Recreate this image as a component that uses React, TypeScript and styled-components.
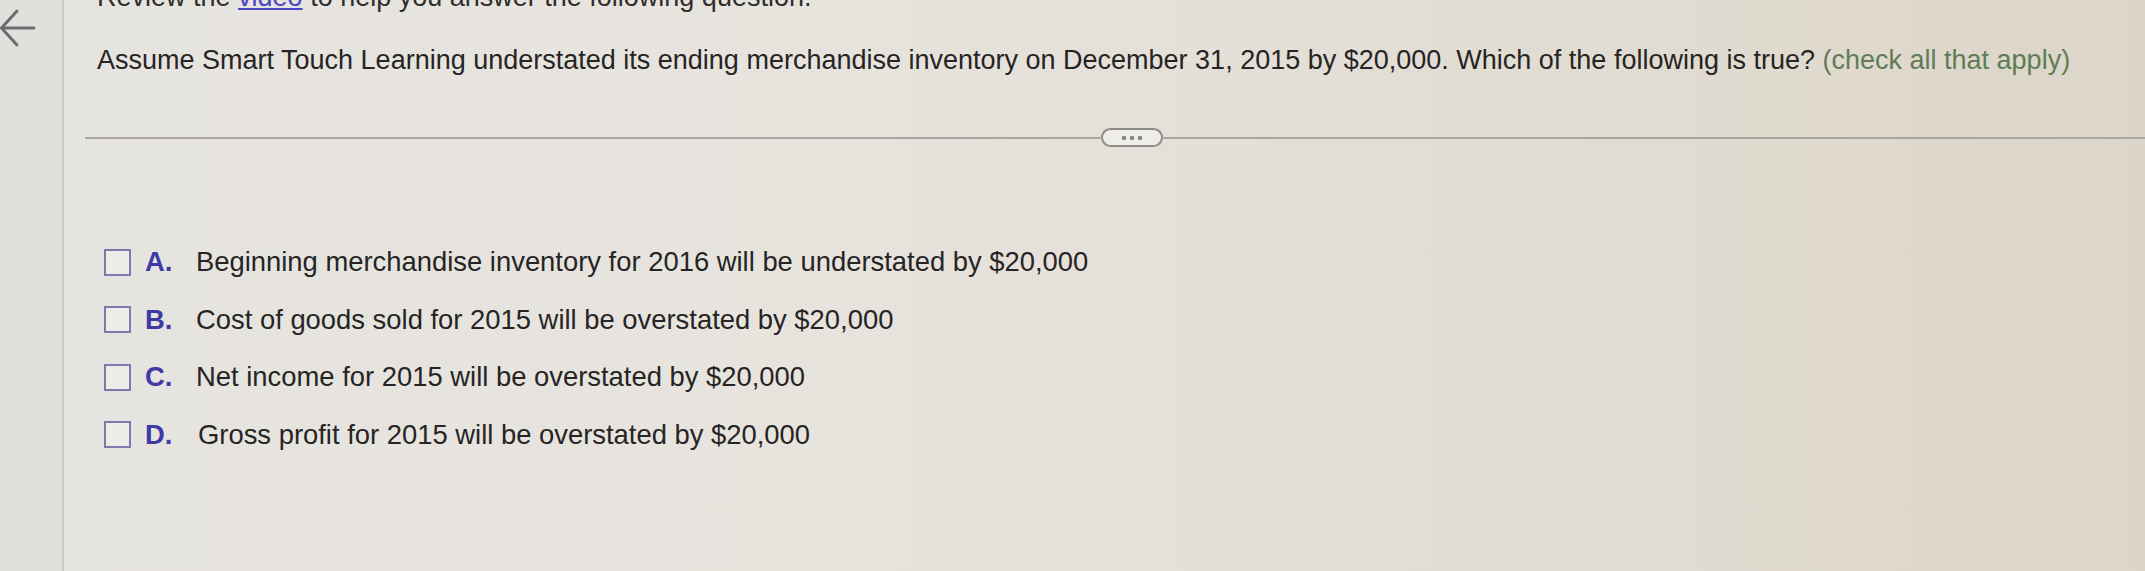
import React from "react";
import styled, { createGlobalStyle } from "styled-components";

const GlobalStyle = createGlobalStyle`
  html, body {
    margin: 0;
    padding: 0;
  }
  body {
    width: 2145px;
    height: 571px;
    overflow: hidden;
    font-family: "Liberation Sans", Arial, sans-serif;
    color: #262424;
    background: linear-gradient(90deg, #e6e4e0 0%, #e7e4de 35%, #e2ddd3 70%, #dcd5c9 100%);
  }
`;

const Page = styled.div`
  display: flex;
  height: 571px;
  overflow: hidden;
`;

const Sidebar = styled.aside`
  width: 64px;
  flex-shrink: 0;
  border-right: 2px solid #cdcbc7;
  background: #e1e0dd;
  padding-top: 8px;
  box-sizing: border-box;
`;

const BackButton = styled.button`
  display: block;
  border: none;
  background: none;
  padding: 0;
  margin: 0;
  cursor: pointer;
`;

const Main = styled.main`
  flex: 1;
  display: flex;
  flex-direction: column;
  min-width: 0;
`;

const Content = styled.div`
  padding-left: 33px;
`;

const Intro = styled.p`
  margin: -18px 0 0;
  font-size: 27px;
  line-height: 30px;
  color: #2f2d2d;
  white-space: nowrap;
`;

const VideoLink = styled.a`
  color: #4a46c8;
  text-decoration: underline;
`;

const Question = styled.p`
  margin: 33px 0 0;
  font-size: 27px;
  line-height: 30px;
  color: #262424;
  white-space: nowrap;
`;

const Hint = styled.span`
  color: #5f7c55;
`;

const DividerRow = styled.div`
  display: flex;
  align-items: center;
  margin: 53px 0 0 21px;
`;

const Rule = styled.div<{ $grow: number }>`
  flex: ${(p) => p.$grow};
  height: 2px;
  background: #a9a6a2;
`;

const MoreButton = styled.button`
  width: 62px;
  height: 19px;
  border: 2px solid #8e8b88;
  border-radius: 10px;
  background: #efede9;
  display: flex;
  align-items: center;
  justify-content: center;
  gap: 4px;
  padding: 0;
  flex-shrink: 0;
`;

const Dot = styled.span`
  width: 4px;
  height: 4px;
  background: #8a8785;
  border-radius: 1px;
`;

const Options = styled.ul`
  list-style: none;
  margin: 100px 0 0;
  padding: 0 0 0 40px;
  display: flex;
  flex-direction: column;
  gap: 27.5px;
`;

const Option = styled.li`
  display: flex;
  align-items: center;
  height: 30px;
  font-size: 27.4px;
  color: #262424;
`;

const Box = styled.span`
  width: 27px;
  height: 27px;
  border: 2.5px solid #7d7ab0;
  background: #eeece9;
  box-sizing: border-box;
  flex-shrink: 0;
`;

const Letter = styled.span<{ $wide?: boolean }>`
  font-weight: bold;
  color: #3d3aa6;
  margin-left: 14px;
  width: ${(p) => (p.$wide ? "53px" : "51px")};
  flex-shrink: 0;
`;

const options = [
  { letter: "A.", text: "Beginning merchandise inventory for 2016 will be understated by $20,000" },
  { letter: "B.", text: "Cost of goods sold for 2015 will be overstated by $20,000" },
  { letter: "C.", text: "Net income for 2015 will be overstated by $20,000" },
  { letter: "D.", text: "Gross profit for 2015 will be overstated by $20,000", wide: true },
];

export default function App() {
  return (
    <>
      <GlobalStyle />
      <Page>
        <Sidebar>
          <BackButton aria-label="Back">
            <svg width="36" height="44" viewBox="0 0 36 44" fill="none">
              <path
                d="M34 20H2M17 3L1.5 20L17 37"
                stroke="#6d6a70"
                strokeWidth="3"
                strokeLinecap="round"
                strokeLinejoin="round"
              />
            </svg>
          </BackButton>
        </Sidebar>
        <Main>
          <Content>
            <Intro>
              Review the <VideoLink href="#">video</VideoLink> to help you answer the following question.
            </Intro>
            <Question>
              Assume Smart Touch Learning understated its ending merchandise inventory on December 31, 2015 by $20,000. Which of the following is true?{" "}
              <Hint>(check all that apply)</Hint>
            </Question>
          </Content>
          <DividerRow>
            <Rule $grow={1016} />
            <MoreButton aria-label="More">
              <Dot />
              <Dot />
              <Dot />
            </MoreButton>
            <Rule $grow={982} />
          </DividerRow>
          <Options>
            {options.map((o) => (
              <Option key={o.letter}>
                <Box />
                <Letter $wide={o.wide}>{o.letter}</Letter>
                <span>{o.text}</span>
              </Option>
            ))}
          </Options>
        </Main>
      </Page>
    </>
  );
}
